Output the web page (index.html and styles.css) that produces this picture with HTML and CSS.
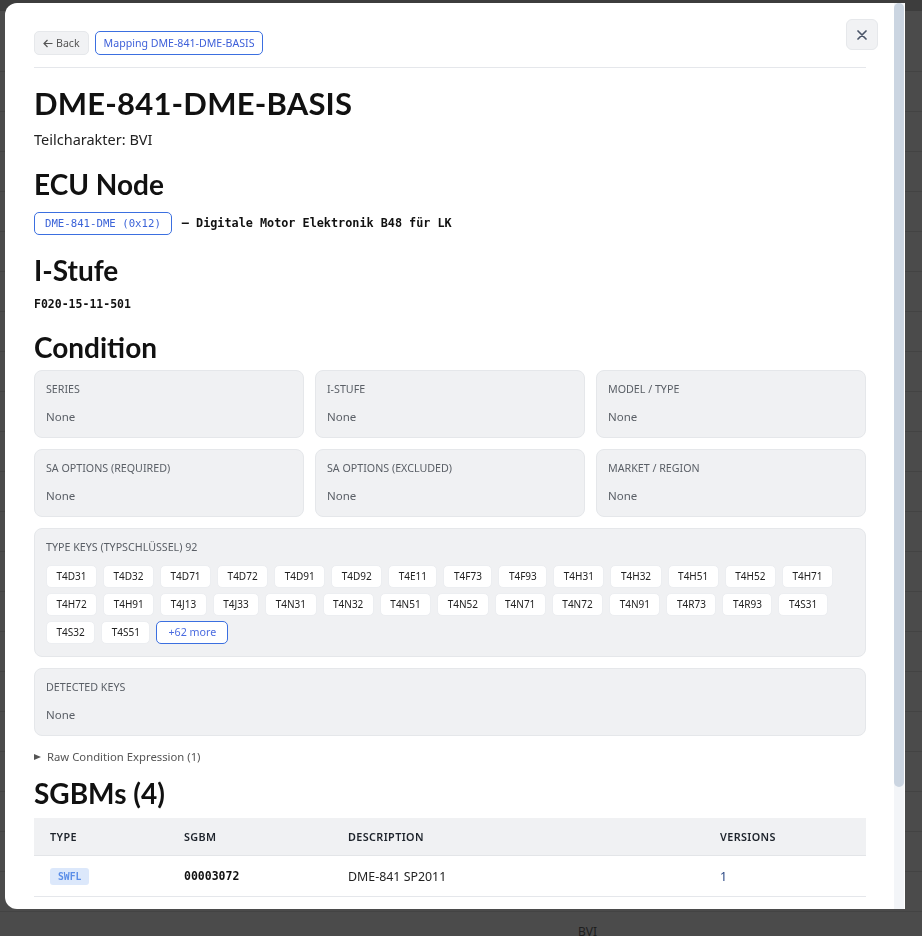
FILE: index.html
```html
<!DOCTYPE html>
<html lang="en">
<head>
  <meta charset="UTF-8">
  <meta name="viewport" content="width=device-width, initial-scale=1.0">
  <link rel="stylesheet" href="styles.css">
  <title>Mapping DME-841-DME-BASIS</title>
</head>
<body>

  <!-- list page behind the dialog -->
  <div class="page">
    <div class="page-bar"></div>
    <div class="page-head"></div>
    <div class="page-row"></div>
    <div class="page-row"></div>
    <div class="page-row"></div>
    <div class="page-row"></div>
    <div class="page-row"></div>
    <div class="page-row"></div>
    <div class="page-row"></div>
    <div class="page-row"></div>
    <div class="page-row"></div>
    <div class="page-row"></div>
    <div class="page-row"></div>
    <div class="page-row"></div>
    <div class="page-row"></div>
    <div class="page-row"></div>
    <div class="page-row"></div>
    <div class="page-row"></div>
    <div class="page-row"></div>
    <div class="page-row"></div>
    <div class="page-row"></div>
    <div class="page-row"></div>
    <div class="page-row"></div>
    <div class="page-row"><span class="page-cell">BVI</span></div>
  </div>

  <div class="modal">
    <div class="modal-body">
      <button class="modal-close" type="button" aria-label="Close">
        <svg width="10" height="10" viewBox="0 0 10 10"><path d="M1 1L9 9M9 1L1 9" stroke="#4a5568" stroke-width="1.7" stroke-linecap="round"/></svg>
      </button>

      <div class="modal-head">
        <button class="btn btn-back" type="button">
          <svg width="10" height="9" viewBox="0 0 10 9"><path d="M9.5 4.5H1.2M4.5 1L1 4.5L4.5 8" fill="none" stroke="#555" stroke-width="1.2"/></svg>
          Back
        </button>
        <button class="btn btn-crumb" type="button">Mapping DME-841-DME-BASIS</button>
      </div>

      <h1 class="title">DME-841-DME-BASIS</h1>
      <p class="subtitle">Teilcharakter: BVI</p>

      <h2 class="section-title">ECU Node</h2>
      <div class="ecu-row">
        <span class="ecu-chip">DME-841-DME (0x12)</span>
        <span class="ecu-desc">— Digitale Motor Elektronik B48 für LK</span>
      </div>

      <h2 class="section-title">I-Stufe</h2>
      <div class="mono-value">F020-15-11-501</div>

      <h2 class="section-title">Condition</h2>
      <div class="cond-grid">
        <div class="cond-card">
          <div class="cond-label">Series</div>
          <div class="cond-value">None</div>
        </div>
        <div class="cond-card">
          <div class="cond-label">I-Stufe</div>
          <div class="cond-value">None</div>
        </div>
        <div class="cond-card">
          <div class="cond-label">Model / Type</div>
          <div class="cond-value">None</div>
        </div>
        <div class="cond-card">
          <div class="cond-label">SA Options (required)</div>
          <div class="cond-value">None</div>
        </div>
        <div class="cond-card">
          <div class="cond-label">SA Options (excluded)</div>
          <div class="cond-value">None</div>
        </div>
        <div class="cond-card">
          <div class="cond-label">Market / Region</div>
          <div class="cond-value">None</div>
        </div>

        <div class="cond-card wide">
          <div class="cond-label">Type Keys (Typschlüssel) 92</div>
          <div class="key-list">
            <span class="key">T4D31</span>
            <span class="key">T4D32</span>
            <span class="key">T4D71</span>
            <span class="key">T4D72</span>
            <span class="key">T4D91</span>
            <span class="key">T4D92</span>
            <span class="key">T4E11</span>
            <span class="key">T4F73</span>
            <span class="key">T4F93</span>
            <span class="key">T4H31</span>
            <span class="key">T4H32</span>
            <span class="key">T4H51</span>
            <span class="key">T4H52</span>
            <span class="key">T4H71</span>
            <span class="key">T4H72</span>
            <span class="key">T4H91</span>
            <span class="key">T4J13</span>
            <span class="key">T4J33</span>
            <span class="key">T4N31</span>
            <span class="key">T4N32</span>
            <span class="key">T4N51</span>
            <span class="key">T4N52</span>
            <span class="key">T4N71</span>
            <span class="key">T4N72</span>
            <span class="key">T4N91</span>
            <span class="key">T4R73</span>
            <span class="key">T4R93</span>
            <span class="key">T4S31</span>
            <span class="key">T4S32</span>
            <span class="key">T4S51</span>
            <button class="key key-more" type="button">+62 more</button>
          </div>
        </div>

        <div class="cond-card wide">
          <div class="cond-label">Detected Keys</div>
          <div class="cond-value">None</div>
        </div>
      </div>

      <details class="raw-expr">
        <summary>Raw Condition Expression (1)</summary>
      </details>

      <h2 class="section-title tight">SGBMs (4)</h2>
      <table class="sgbm-table">
        <thead>
          <tr>
            <th class="col-type">Type</th>
            <th class="col-sgbm">SGBM</th>
            <th class="col-desc">Description</th>
            <th>Versions</th>
          </tr>
        </thead>
        <tbody>
          <tr>
            <td><span class="badge">SWFL</span></td>
            <td class="mono">00003072</td>
            <td>DME-841 SP2011</td>
            <td class="num">1</td>
          </tr>
          <tr>
            <td><span class="badge">SWFL</span></td>
            <td class="mono">00003073</td>
            <td>DME-841 SP2011 Daten</td>
            <td class="num">1</td>
          </tr>
          <tr>
            <td><span class="badge">BTLD</span></td>
            <td class="mono">00003071</td>
            <td>DME-841 Bootloader</td>
            <td class="num">1</td>
          </tr>
          <tr>
            <td><span class="badge">CAFD</span></td>
            <td class="mono">00000A2B</td>
            <td>DME-841 Codierung</td>
            <td class="num">2</td>
          </tr>
        </tbody>
      </table>
    </div>

    <!-- scroll rail, the dialog body is taller than the window -->
    <div class="modal-rail"><div class="modal-thumb"></div></div>
  </div>

</body>
</html>
```

FILE: styles.css
```css
body {
  margin: 0;
  background: #4b4b4b;
  font-family: 'Noto Sans', sans-serif;
  color: #222;
  overflow: hidden;
}

/* dimmed list page behind the dialog */
.page-bar {
  height: 11px;
  background: #3d3d3d;
}

.page-head {
  height: 60px;
  border-bottom: 1px solid #434343;
}

.page-row {
  height: 39px;
  border-bottom: 1px solid #434343;
  font-size: 12px;
  line-height: 39px;
  color: #1e1e1e;
}

.page-cell {
  margin-left: 578px;
}

/* dialog */
.modal {
  position: fixed;
  left: 5px;
  top: 3px;
  width: 900px;
  height: 906px;
  display: flex;
  background: #fff;
  border-radius: 12px 0 0 12px;
  overflow: hidden;
}

.modal-body {
  position: relative;
  width: 889px;
  box-sizing: border-box;
  padding: 28px 28px 30px 29px;
  overflow: hidden;
}

.modal-rail {
  width: 10px;
  background: #f3f5f8;
}

.modal-thumb {
  height: 784px;
  background: #cbd5e1;
  border-radius: 5px;
}

.modal-close {
  position: absolute;
  top: 16px;
  right: 16px;
  width: 32px;
  height: 31px;
  display: flex;
  align-items: center;
  justify-content: center;
  padding: 0;
  background: #f1f2f4;
  border: 1px solid #e6e8eb;
  border-radius: 6px;
  cursor: pointer;
}

.modal-head {
  display: flex;
  gap: 6px;
  padding-bottom: 12px;
  border-bottom: 1px solid #e5e7eb;
}

.btn {
  display: flex;
  align-items: center;
  gap: 3px;
  height: 24px;
  box-sizing: border-box;
  padding: 0 8px;
  font-family: 'Noto Sans', sans-serif;
  font-size: 10.6px;
  border-radius: 5px;
  cursor: pointer;
}

.btn-back {
  background: #f1f2f4;
  border: 1px solid #e6e8eb;
  color: #555;
}

.btn-crumb {
  background: #fff;
  border: 1px solid #3b6fe0;
  color: #3d5fd9;
}

.title {
  margin: 16px 0 0;
  font-family: 'Lato', sans-serif;
  font-size: 31px;
  line-height: 38px;
  font-weight: 700;
  letter-spacing: 0.2px;
  color: #111;
}

.subtitle {
  margin: 7px 0 0;
  font-size: 14.5px;
  line-height: 20px;
  color: #222;
}

.section-title {
  margin: 18px 0 0;
  font-family: 'Lato', sans-serif;
  font-size: 28px;
  line-height: 34px;
  font-weight: 700;
  color: #111;
}

.section-title.tight {
  margin-top: 9px;
}

.ecu-row {
  display: flex;
  align-items: center;
  gap: 10px;
  margin-top: 10px;
  height: 24px;
}

.ecu-chip {
  height: 23px;
  box-sizing: border-box;
  padding: 0 10px;
  border: 1px solid #3b6fe0;
  border-radius: 5px;
  font-family: 'DejaVu Sans Mono', monospace;
  font-size: 10.7px;
  line-height: 21px;
  color: #3b63d8;
}

.ecu-desc {
  font-family: 'DejaVu Sans Mono', monospace;
  font-size: 11.8px;
  font-weight: 700;
  color: #111;
}

.mono-value {
  margin-top: 9px;
  font-family: 'DejaVu Sans Mono', monospace;
  font-size: 11.5px;
  line-height: 16px;
  font-weight: 700;
  color: #111;
}

/* condition cards */
.cond-grid {
  display: grid;
  grid-template-columns: repeat(3, 1fr);
  gap: 11px;
  margin-top: 6px;
}

.cond-card {
  background: #f0f1f3;
  border: 1px solid #e5e7ea;
  border-radius: 8px;
  padding: 10px 11px 11px;
}

.cond-card.wide {
  grid-column: 1 / -1;
}

.cond-label {
  font-size: 10.7px;
  line-height: 16px;
  text-transform: uppercase;
  color: #5a5f66;
}

.cond-value {
  margin-top: 11px;
  font-size: 11.5px;
  line-height: 18px;
  color: #5a5f66;
}

.key-list {
  display: flex;
  flex-wrap: wrap;
  gap: 5px 6px;
  margin-top: 10px;
  margin-bottom: 1px;
}

.key {
  height: 23px;
  box-sizing: border-box;
  padding: 0 9.5px;
  background: #fff;
  border: 1px solid #eceef1;
  border-radius: 5px;
  font-family: 'Noto Sans', sans-serif;
  font-size: 10px;
  line-height: 21px;
  color: #222;
}

.key-more {
  border-color: #3b6fe0;
  color: #4a6be0;
  font-size: 10.7px;
  padding: 0 11px;
  cursor: pointer;
}

.raw-expr {
  margin-top: 11px;
  font-size: 11.3px;
  color: #555;
}

.raw-expr summary {
  display: flex;
  align-items: center;
  gap: 6px;
  line-height: 20px;
  list-style: none;
  cursor: pointer;
}

.raw-expr summary::before {
  content: "";
  border-left: 7px solid #555;
  border-top: 3.5px solid transparent;
  border-bottom: 3.5px solid transparent;
}

/* SGBM table */
.sgbm-table {
  width: 100%;
  margin-top: 8px;
  border-collapse: collapse;
}

.sgbm-table th {
  height: 37px;
  padding: 0 16px;
  background: #f0f1f3;
  border-bottom: 1px solid #e3e5e8;
  text-align: left;
  font-size: 10.8px;
  font-weight: 600;
  letter-spacing: 0.4px;
  text-transform: uppercase;
  color: #1d232b;
}

.sgbm-table td {
  height: 40px;
  padding: 0 16px;
  border-bottom: 1px solid #e5e7eb;
  font-size: 12.4px;
  color: #222;
}

.col-type {
  width: 102px;
}

.col-sgbm {
  width: 132px;
}

.col-desc {
  width: 340px;
}

.sgbm-table td.mono {
  font-family: 'DejaVu Sans Mono', monospace;
  font-size: 11.5px;
  font-weight: 700;
  color: #111;
}

.sgbm-table td.num {
  color: #2d4a86;
}

.badge {
  display: inline-block;
  height: 17px;
  padding: 0 8px;
  background: #dce8fb;
  border-radius: 3px;
  font-family: 'DejaVu Sans Mono', monospace;
  font-size: 9.7px;
  font-weight: 700;
  line-height: 17px;
  color: #5b8ee8;
}
```
